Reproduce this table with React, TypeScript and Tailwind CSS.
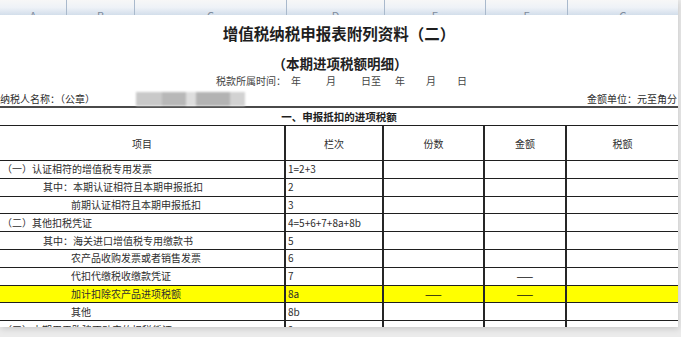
import React from 'react';

// ─── Spreadsheet column strip ─────────────────────────────────────────────────
const sheetCols = [
	{ label: 'A', w: 'w-[67px]' },
	{ label: 'B', w: 'w-[68px]' },
	{ label: 'C', w: 'w-[152px]' },
	{ label: 'D', w: 'w-[98px]' },
	{ label: 'E', w: 'w-[101px]' },
	{ label: 'F', w: 'w-[82px]' },
	{ label: 'G', w: 'w-[110px]' },
];

type Row = {
	item: string;
	indent: string;
	no: string;
	count?: string;
	amount?: string;
	hl?: boolean;
};

const rows: Row[] = [
	{ item: '（一）认证相符的增值税专用发票', indent: 'pl-[2px]', no: '1=2+3' },
	{ item: '其中：本期认证相符且本期申报抵扣', indent: 'pl-[43px]', no: '2' },
	{ item: '前期认证相符且本期申报抵扣', indent: 'pl-[71px]', no: '3' },
	{ item: '（二）其他扣税凭证', indent: 'pl-[2px]', no: '4=5+6+7+8a+8b' },
	{ item: '其中：海关进口增值税专用缴款书', indent: 'pl-[43px]', no: '5' },
	{ item: '农产品收购发票或者销售发票', indent: 'pl-[71px]', no: '6' },
	{ item: '代扣代缴税收缴款凭证', indent: 'pl-[71px]', no: '7', amount: '——' },
	{ item: '加计扣除农产品进项税额', indent: 'pl-[71px]', no: '8a', count: '——', amount: '——', hl: true },
	{ item: '其他', indent: 'pl-[71px]', no: '8b' },
	{ item: '（三）本期用于购建不动产的扣税凭证', indent: 'pl-[2px]', no: '9' },
];

const grid = 'grid grid-cols-[286px_98px_101px_82px_111px]';
const vline = 'border-r-2 border-[#262626]';

export default function App() {
	return (
		<div className="w-[681px] h-[337px] overflow-hidden bg-[#ebebeb] font-['Noto_Sans_CJK_SC',sans-serif]">
			<div className="w-[678px] h-[327px] overflow-hidden bg-white flex flex-col text-[#2e2e2e] shadow-[1px_2px_6px_rgba(0,0,0,0.14)]">
				{/* Column letters, cut off at the top of the photo */}
				<div className="flex h-[15px] flex-none overflow-hidden bg-linear-to-b from-[#f7f7f7] via-[#eef2f7] to-[#d3deeb]">
					{sheetCols.map((c, i) => (
						<div
							key={c.label}
							className={`${c.w} flex justify-center pt-[10px] text-[11px] leading-none text-[#7d8b9c] ${
								i < sheetCols.length - 1 ? 'border-r border-[#a9b9cc]' : ''
							}`}
						>
							{c.label}
						</div>
					))}
				</div>

				{/* Heading */}
				<h1 className="mt-[9px] text-center text-[15.5px] leading-[18px] font-bold text-[#1e1e1e]">
					增值税纳税申报表附列资料（二）
				</h1>
				<div className="mt-[14px] pl-[2px] text-center text-[13.5px] leading-[14px] font-bold text-[#222]">
					（本期进项税额明细）
				</div>
				<div className="mt-[5px] flex text-[10px] leading-[12px] text-[#444]">
					<span className="ml-[216px]">税款所属时间：</span>
					<span className="ml-[5px]">年</span>
					<span className="ml-[25px]">月</span>
					<span className="ml-[25px]">日至</span>
					<span className="ml-[14px]">年</span>
					<span className="ml-[21px]">月</span>
					<span className="ml-[21px]">日</span>
				</div>
				<div className="mt-[5px] flex h-[14px] items-center text-[10px] leading-[12px]">
					<span>纳税人名称：（公章）</span>
					{/* Redacted name */}
					<div className="ml-[41px] flex h-[14px] w-[109px] blur-[1px]">
						<div className="w-[26px] bg-[#c9c9c9]" />
						<div className="w-[24px] bg-[#b8b8b8]" />
						<div className="w-[10px] bg-[#dedede]" />
						<div className="w-[34px] bg-[#b3b3b3]" />
						<div className="w-[15px] bg-[#d2d2d2]" />
					</div>
					<span className="ml-auto pr-[1px]">金额单位：元至角分</span>
				</div>
				<div className="h-[2px] flex-none bg-[#4a4a4a]" />

				{/* Section title */}
				<div className="flex h-[17px] flex-none items-center justify-center text-[10.5px] font-bold text-[#1e1e1e]">
					一、申报抵扣的进项税额
				</div>

				{/* Table */}
				<div className="flex-none border-t border-[#1f1f1f]">
					<div className={`${grid} h-[35px] border-b border-[#1f1f1f] text-[10px]`}>
						<div className={`${vline} flex items-center justify-center`}>项目</div>
						<div className={`${vline} flex items-center justify-center`}>栏次</div>
						<div className={`${vline} flex items-center justify-center`}>份数</div>
						<div className={`${vline} flex items-center justify-center`}>金额</div>
						<div className="flex items-center justify-center">税额</div>
					</div>
					{rows.map((r) => (
						<div
							key={r.no}
							className={`${grid} h-[17.8px] border-b border-[#1f1f1f] text-[10px] leading-none ${
								r.hl ? 'bg-[#ffff00]' : ''
							}`}
						>
							<div className={`${vline} ${r.indent} flex items-center whitespace-nowrap`}>{r.item}</div>
							<div className={`${vline} flex items-center pl-[2px]`}>{r.no}</div>
							<div className={`${vline} flex items-center justify-center text-[#111]`}>{r.count}</div>
							<div className={`${vline} flex items-center justify-center text-[#111]`}>{r.amount}</div>
							<div />
						</div>
					))}
				</div>
			</div>
		</div>
	);
}
